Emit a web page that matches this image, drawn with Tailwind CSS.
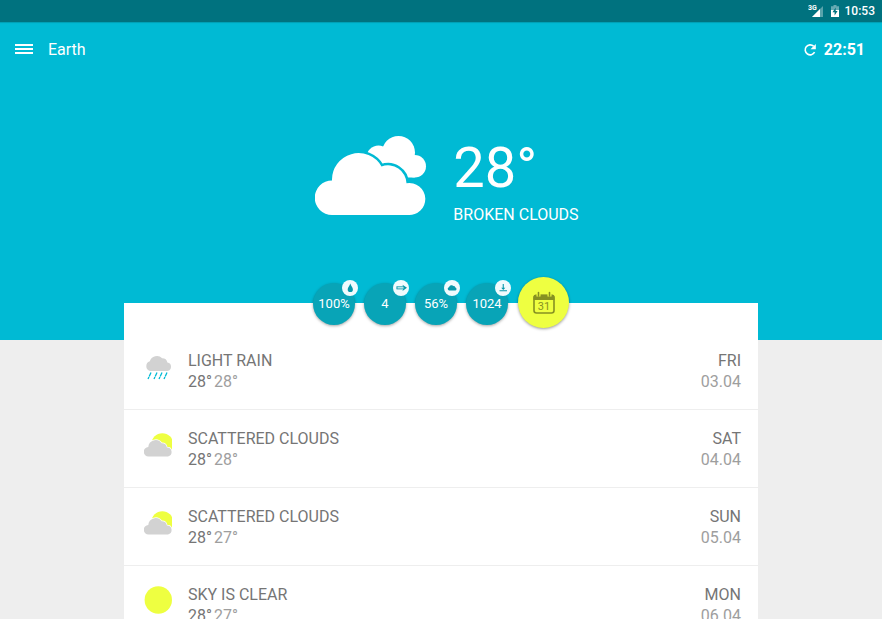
<!DOCTYPE html>
<html lang="en">
<head>
<meta charset="utf-8">
<meta name="viewport" content="width=device-width, initial-scale=1">
<title>Weather</title>
<script src="https://cdn.jsdelivr.net/npm/@tailwindcss/browser@4"></script>
</head>
<body class="h-screen overflow-hidden bg-[#eeeeee] font-['Roboto',sans-serif] text-base">
<svg class="hidden" aria-hidden="true">
  <symbol id="partly" viewBox="0 0 28 28">
    <circle cx="18.300" cy="14" r="10.800" fill="#eeff41"/>
    <path d="M4.600 26.400a4.700 4.700 0 0 1-.3-9.400A7.300 7.300 0 0 1 17.600 13.300 5.100 5.100 0 0 1 22.900 17.500 4.500 4.500 0 0 1 24 26.400Z" fill="#d2d2d2" stroke="#fff" stroke-width="1.400" paint-order="stroke"/>
  </symbol>
</svg>

<div class="flex h-[22px] items-center justify-end bg-[#00727f] pr-[7px] text-white">
  <svg class="mr-[6px] h-[14px] w-[16px]" viewBox="0 0 16 14" aria-label="3G signal">
    <path d="M15 2V13H4Z" fill="#fff" fill-opacity=".35"/>
    <path d="M12 5V13H4Z" fill="#fff"/>
    <text x="0" y="6" class="text-[7px] font-bold" fill="#fff">3G</text>
  </svg>
  <svg class="mr-[5px] h-[14px] w-[10px]" viewBox="0 0 10 14" aria-label="Battery charging">
    <path d="M3.500 1h3v1.200H9V7H1V2.200H3.500Z" fill="#fff" fill-opacity=".4"/>
    <path d="M1 6H9V13H1Z" fill="#fff"/>
    <path d="M5.700 3.500 2.500 8.300H4.600V11.500L7.600 6.900H5.700Z" fill="#00727f"/>
  </svg>
  <span class="text-xs font-medium">10:53</span>
</div>

<header class="flex h-[318px] flex-col bg-[#00bad4] text-white shadow-[inset_0_2px_1px_-1px_#00000026]">
  <nav class="flex h-14 items-center px-4">
    <button aria-label="Menu" class="-ml-px mr-[15px]">
      <svg class="h-3 w-[18px]" viewBox="0 0 18 12" fill="#fff"><path d="M0 0h18v2H0zM0 4h18v2H0zM0 8h18v2H0z"/></svg>
    </button>
    <h1>Earth</h1>
    <button class="ml-auto flex items-center gap-[7px] pr-px font-bold" aria-label="Refresh, updated 22:51">
      <svg class="h-[14px] w-[14px]" viewBox="0 0 14 14" fill="none" stroke="#fff" stroke-width="1.600"><path d="M11.600 9.200A5 5 0 1 1 10.600 3.200"/><path d="M12.800 1V6.300H7.500Z" fill="#fff" stroke="none"/></svg>
      <span>22:51</span>
    </button>
  </nav>
  <section class="flex items-start justify-center gap-[26px] pt-[57px] pl-3">
    <svg class="mt-px h-20 w-28" viewBox="316 136 112 80" aria-label="Broken clouds">
      <g fill="#fff"><circle cx="399.500" cy="152.500" r="16.500"/><circle cx="415.700" cy="166.200" r="11.300"/><circle cx="379.500" cy="157.500" r="12"/><path d="M380 150H412L415.700 177.500H380Z"/></g>
      <path d="M333 215A17 17 0 0 1 333 180.500A26.500 26.500 0 0 1 382.500 166.500A18.500 18.500 0 0 1 407.500 183.300A16 16 0 1 1 409 215Z" fill="#fff" stroke="#00bad4" stroke-width="5" paint-order="stroke"/>
    </svg>
    <div>
      <p class="text-[56px] leading-[66px]">28°</p>
      <p class="leading-7">BROKEN CLOUDS</p>
    </div>
  </section>
</header>

<main class="mx-auto -mt-[37px] flex w-[634px] max-w-full flex-col bg-white text-[#757575]">
  <div class="relative -mt-[26px] flex h-[55px] items-start justify-center gap-[9px] text-[13px] text-white">
    <div class="relative mt-[6px] flex size-[42px] items-center justify-center rounded-full bg-[#08a4b7] shadow-[0_1px_3px_#00000059]">100%
      <svg class="absolute -top-[3px] -right-[3px] size-4" viewBox="0 0 16 16" aria-label="Humidity"><circle cx="8" cy="8" r="8" fill="#f0fbfd"/><path d="M8.300 3.500C7.500 6 5.700 7.500 5.700 9.400a2.600 2.600 0 0 0 5.200 0C10.900 7.500 9.100 6 8.300 3.500Z" fill="#0898aa"/></svg>
    </div>
    <div class="relative mt-[6px] flex size-[42px] items-center justify-center rounded-full bg-[#08a4b7] shadow-[0_1px_3px_#00000059]">4
      <svg class="absolute -top-[3px] -right-[3px] size-4" viewBox="0 0 16 16" aria-label="Wind"><circle cx="8" cy="8" r="8" fill="#f0fbfd"/><path d="M3.500 6.800H10M3.500 8.900H10M4 6.800V8.900" stroke="#0898aa" stroke-width=".9"/><path d="M9.500 4.700 14 7.800 9.500 11 10.500 7.800Z" fill="#0898aa"/></svg>
    </div>
    <div class="relative mt-[6px] flex size-[42px] items-center justify-center rounded-full bg-[#08a4b7] shadow-[0_1px_3px_#00000059]">56%
      <svg class="absolute -top-[3px] -right-[3px] size-4" viewBox="0 0 16 16" aria-label="Cloudiness"><circle cx="8" cy="8" r="8" fill="#f0fbfd"/><path d="M5 10.500a1.700 1.700 0 0 1 0-3.300A2.600 2.600 0 0 1 9.500 6.100 2 2 0 0 1 11.400 7.500 1.600 1.600 0 0 1 11.500 10.500Z" fill="#0898aa"/></svg>
    </div>
    <div class="relative mt-[6px] flex size-[42px] items-center justify-center rounded-full bg-[#08a4b7] shadow-[0_1px_3px_#00000059]">1024
      <svg class="absolute -top-[3px] -right-[3px] size-4" viewBox="0 0 16 16" aria-label="Pressure"><circle cx="8" cy="8" r="8" fill="#f0fbfd"/><path d="M7.700 4h1.100V7.800h1.500L8.250 10 6.200 7.800H7.700ZM4.500 10.300h7.500v1H4.500Z" fill="#0898aa"/></svg>
    </div>
    <button aria-label="Calendar" class="ml-px flex size-[51px] items-center justify-center rounded-full bg-[#eeff41] shadow-[0_1px_3px_#00000066]">
      <svg class="h-6 w-6" viewBox="0 0 24 24" fill="none" stroke="#869122">
        <rect x="2" y="4.500" width="20" height="17.500" rx="2.500" stroke-width="1.600"/>
        <path d="M1.500 9V6Q1.500 3.500 4 3.500H20Q22.500 3.500 22.500 6V9Z" fill="#869122" stroke="none"/>
        <path d="M6.500 1V5.500M17.500 1V5.500" stroke="#eeff41" stroke-width="4"/>
        <path d="M6.500 1.500V5M17.500 1.500V5" stroke-width="1.600" stroke-linecap="round"/>
        <text x="12" y="19" text-anchor="middle" class="text-[11px]" fill="#869122" stroke="none">31</text>
      </svg>
    </button>
  </div>

  <ul>
    <li class="flex h-[78px] items-start gap-4 border-b border-[#eeeeee] pt-[18px] pr-[17px] pl-5 leading-[21px]">
      <svg class="mt-[2px] size-7" viewBox="0 0 28 28" aria-hidden="true"><path d="M6 18.900A5 5 0 0 1 5.800 9.300A7.300 7.300 0 0 1 18.200 6.300 5.300 5.300 0 0 1 23.400 10.600 4.200 4.200 0 0 1 23.500 18.900Z" fill="#d2d2d2"/><path d="M7 20.500 4 27M13 20.500 10 27M18 20.500 15 27M23 20.500 20 27" stroke="#00bad4" stroke-width="1.300" stroke-dasharray="4.300 .6"/></svg>
      <div class="flex-1"><p>LIGHT RAIN</p><p><span>28°</span><span class="ml-[2px] text-[#9e9e9e]">28°</span></p></div>
      <div class="text-right"><p>FRI</p><p class="text-[#9e9e9e]">03.04</p></div>
    </li>
    <li class="flex h-[78px] items-start gap-4 border-b border-[#eeeeee] pt-[18px] pr-[17px] pl-5 leading-[21px]">
      <svg class="mt-[2px] size-7" aria-hidden="true"><use href="#partly"/></svg>
      <div class="flex-1"><p>SCATTERED CLOUDS</p><p><span>28°</span><span class="ml-[2px] text-[#9e9e9e]">28°</span></p></div>
      <div class="text-right"><p>SAT</p><p class="text-[#9e9e9e]">04.04</p></div>
    </li>
    <li class="flex h-[78px] items-start gap-4 border-b border-[#eeeeee] pt-[18px] pr-[17px] pl-5 leading-[21px]">
      <svg class="mt-[2px] size-7" aria-hidden="true"><use href="#partly"/></svg>
      <div class="flex-1"><p>SCATTERED CLOUDS</p><p><span>28°</span><span class="ml-[2px] text-[#9e9e9e]">27°</span></p></div>
      <div class="text-right"><p>SUN</p><p class="text-[#9e9e9e]">05.04</p></div>
    </li>
    <li class="flex h-[78px] items-start gap-4 border-b border-[#eeeeee] pt-[18px] pr-[17px] pl-5 leading-[21px]">
      <svg class="mt-[2px] size-7" viewBox="0 0 28 28" aria-hidden="true"><circle cx="14.300" cy="14" r="13.700" fill="#eeff41"/></svg>
      <div class="flex-1"><p>SKY IS CLEAR</p><p><span>28°</span><span class="ml-[2px] text-[#9e9e9e]">27°</span></p></div>
      <div class="text-right"><p>MON</p><p class="text-[#9e9e9e]">06.04</p></div>
    </li>
  </ul>
</main>
</body>
</html>
